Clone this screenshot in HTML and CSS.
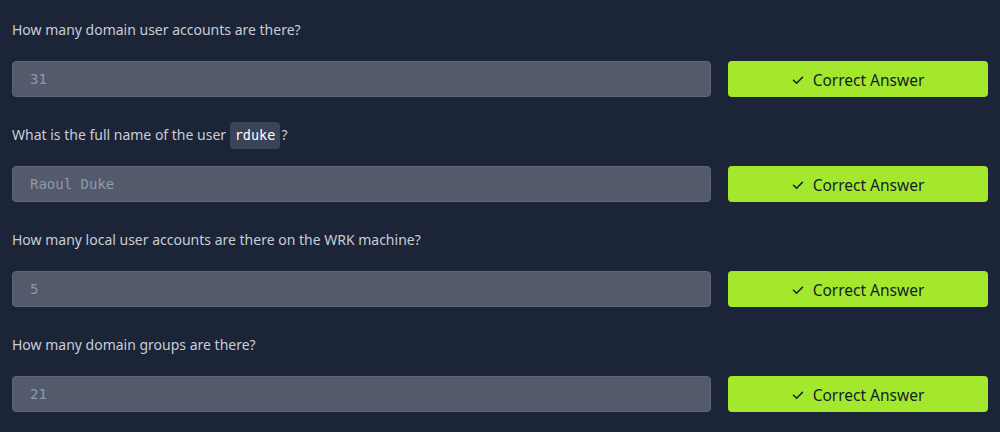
FILE: index.html
```html
<!DOCTYPE html>
<html>
<head>
<meta charset="utf-8">
<link rel="stylesheet" href="styles.css">
</head>
<body>
<div class="list">
  <div class="item">
    <div class="question">How many domain user accounts are there?</div>
    <div class="row">
      <div class="answer">31</div>
      <button class="btn"><svg class="check" viewBox="0 0 12 12" width="12" height="12"><path d="M1.5 6.2 L4.6 9.2 L10.5 3.2" fill="none" stroke="currentColor" stroke-width="1.5" stroke-linecap="round" stroke-linejoin="round"/></svg>Correct Answer</button>
    </div>
  </div>
  <div class="item">
    <div class="question">What is the full name of the user <code class="code">rduke</code>?</div>
    <div class="row">
      <div class="answer">Raoul Duke</div>
      <button class="btn"><svg class="check" viewBox="0 0 12 12" width="12" height="12"><path d="M1.5 6.2 L4.6 9.2 L10.5 3.2" fill="none" stroke="currentColor" stroke-width="1.5" stroke-linecap="round" stroke-linejoin="round"/></svg>Correct Answer</button>
    </div>
  </div>
  <div class="item">
    <div class="question">How many local user accounts are there on the WRK machine?</div>
    <div class="row">
      <div class="answer">5</div>
      <button class="btn"><svg class="check" viewBox="0 0 12 12" width="12" height="12"><path d="M1.5 6.2 L4.6 9.2 L10.5 3.2" fill="none" stroke="currentColor" stroke-width="1.5" stroke-linecap="round" stroke-linejoin="round"/></svg>Correct Answer</button>
    </div>
  </div>
  <div class="item">
    <div class="question">How many domain groups are there?</div>
    <div class="row">
      <div class="answer">21</div>
      <button class="btn"><svg class="check" viewBox="0 0 12 12" width="12" height="12"><path d="M1.5 6.2 L4.6 9.2 L10.5 3.2" fill="none" stroke="currentColor" stroke-width="1.5" stroke-linecap="round" stroke-linejoin="round"/></svg>Correct Answer</button>
    </div>
  </div>
</div>
</body>
</html>
```
FILE: styles.css
```css
html, body {
  margin: 0;
  padding: 0;
  background: #1c2438;
}
body {
  font-family: "Noto Sans", sans-serif;
  overflow: hidden;
}
.list {
  padding: 20px 12px 0 12px;
  display: flex;
  flex-direction: column;
  gap: 28px;
}
.question {
  font-size: 14px;
  line-height: 20px;
  height: 20px;
  color: #c8cdd6;
  margin-bottom: 21px;
}
.code {
  font-family: "DejaVu Sans Mono", monospace;
  font-size: 13.5px;
  color: #ffffff;
  background: #3a4357;
  border-radius: 4px;
  padding: 5px 5px 6px 5px;
  margin-left: 0;
  margin-right: 1px;
}
.row {
  display: flex;
  gap: 17px;
}
.answer {
  flex: 1;
  height: 36px;
  box-sizing: border-box;
  background: #535a6b;
  border: 1px solid #5e6577;
  border-radius: 4px;
  padding: 0 16px 0 17px;
  display: flex;
  align-items: center;
  font-family: "DejaVu Sans Mono", monospace;
  font-size: 14px;
  color: #8f99ad;
}
.btn {
  width: 260px;
  height: 36px;
  border: none;
  border-radius: 4px;
  background: #a3e82c;
  color: #141c2b;
  font-family: "Noto Sans", sans-serif;
  font-size: 15.5px;
  display: flex;
  align-items: center;
  justify-content: center;
  gap: 9px;
  padding: 1px 0 0 0;
}
.check {
  display: block;
}
```
